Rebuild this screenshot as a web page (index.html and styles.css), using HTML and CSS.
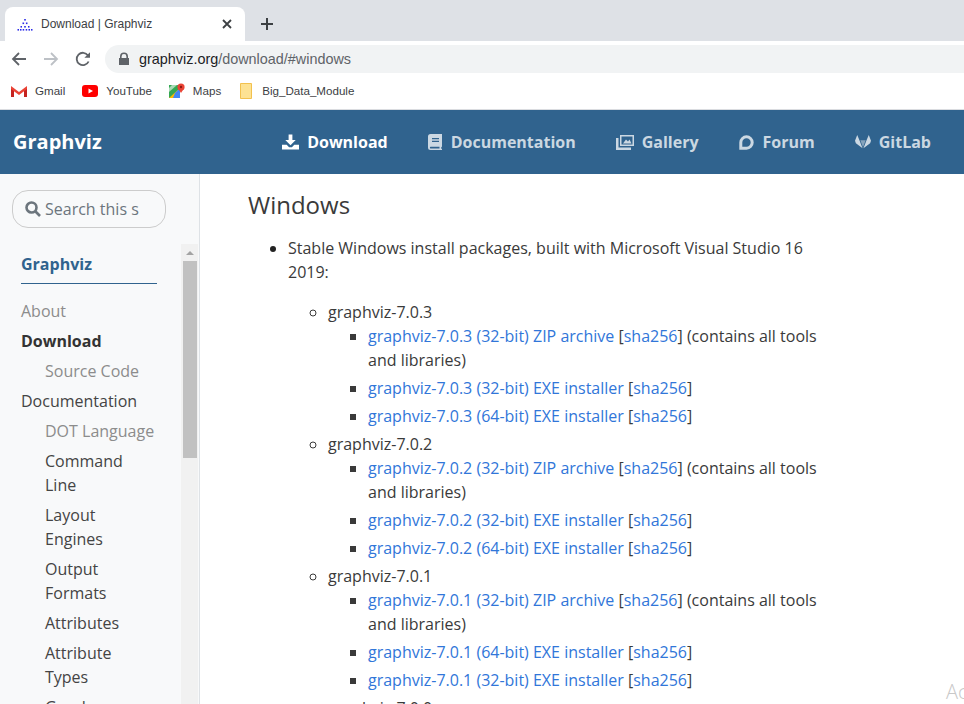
FILE: index.html
```html
<!DOCTYPE html>
<html>
  <head>
    <title>Download | Graphviz</title>
    <link rel="stylesheet" href="styles.css">
  </head>
  <body>
    <!-- browser chrome -->
    <div class="tabstrip">
      <div class="tab">
        <svg class="favicon" width="16" height="16" viewBox="0 0 16 16" fill="#2a2ae8">
          <rect x="7.200" y="3" width="1.600" height="1.600"/>
          <rect x="5.500" y="6.500" width="1.600" height="1.600"/><rect x="8.900" y="6.500" width="1.600" height="1.600"/>
          <rect x="3.500" y="10" width="1.500" height="1.600"/><rect x="7.200" y="10" width="1.600" height="1.600"/><rect x="11" y="10" width="1.500" height="1.600"/>
          <rect x="0.500" y="13" width="1.500" height="1.600"/><rect x="3" y="13" width="1.500" height="1.600"/><rect x="5.700" y="13" width="1.500" height="1.600"/><rect x="8.700" y="13" width="1.500" height="1.600"/><rect x="11.500" y="13" width="1.500" height="1.600"/><rect x="14" y="13" width="1.500" height="1.600"/>
        </svg>
        <span class="tab-title">Download | Graphviz</span>
        <svg width="10" height="10" viewBox="0 0 10 10" stroke="#3c4043" stroke-width="1.800"><path d="M1 1l8 8M9 1l-8 8"/></svg>
      </div>
      <svg class="newtab" width="14" height="14" viewBox="0 0 14 14" stroke="#3c4043" stroke-width="2"><path d="M7 1v12M1 7h12"/></svg>
    </div>
    <div class="toolbar">
      <svg width="16" height="16" viewBox="0 0 16 16" fill="none" stroke="#5f6368" stroke-width="1.800"><path d="M15 8H2M8 2L2 8l6 6"/></svg>
      <svg width="16" height="16" viewBox="0 0 16 16" fill="none" stroke="#bdc1c6" stroke-width="1.800"><path d="M1 8h13M8 2l6 6-6 6"/></svg>
      <svg width="16" height="16" viewBox="0 0 16 16" fill="none" stroke="#5f6368" stroke-width="1.800"><path d="M13.600 10.500A6.200 6.200 0 1 1 13 4.400"/><path d="M15 1.200v5.600H9.400z" fill="#5f6368" stroke="none"/></svg>
      <div class="omnibox">
        <svg width="12" height="14" viewBox="0 0 12 14" fill="#5f6368"><path d="M2 6V4.500a4 4 0 0 1 8 0V6h1v7H1V6zm1.600 0h4.800V4.500a2.400 2.400 0 0 0-4.800 0z"/></svg>
        <span class="url"><b>graphviz.org</b>/download/#windows</span>
      </div>
    </div>
    <div class="bookmarks">
      <span class="bookmark">
        <svg width="16" height="12" viewBox="0 0 16 12"><path d="M0 2v10h3V5z" fill="#c5221f"/><path d="M16 2v10h-3V5z" fill="#c5221f"/><path d="M0 1l8 6 8-6v3L8 10 0 4z" fill="#ea4335"/></svg>
        Gmail
      </span>
      <span class="bookmark">
        <svg width="16" height="12" viewBox="0 0 16 12"><rect width="16" height="12" rx="3" fill="#f00"/><path d="M6.500 3.500v5L11 6z" fill="#fff"/></svg>
        YouTube
      </span>
      <span class="bookmark">
        <svg width="16" height="16" viewBox="0 0 16 16"><path d="M0 2h11v13H0z" fill="#34a853"/><path d="M0 15L11 5v10z" fill="#fbbc04"/><path d="M6 10l5-5v10H4z" fill="#4285f4"/><path d="M3 2h5L0 9V5z" fill="#a8dab5"/><circle cx="12" cy="4" r="3.600" fill="#ea4335"/><path d="M9.400 6l2.600 4 2.600-4z" fill="#ea4335"/><circle cx="12" cy="4" r="1.200" fill="#8c1a12"/></svg>
        Maps
      </span>
      <span class="bookmark">
        <svg width="16" height="16" viewBox="-2 0 16 16"><path d="M.5.5h11v15H.5z" fill="#fde293" stroke="#f2c14e"/></svg>
        Big_Data_Module
      </span>
    </div>

    <!-- site navbar -->
    <header class="navbar">
      <a class="brand">Graphviz</a>
      <nav class="nav-links">
        <a class="nav-link active">
          <svg width="17" height="16" viewBox="0 0 18 16" fill="currentColor"><path d="M7 0h4v6h3.500L9 11.500 3.500 6H7z"/><path d="M0 11h5l2.500 2.500h3L13 11h5v5H0z"/></svg>
          Download
        </a>
        <a class="nav-link">
          <svg width="15" height="16" viewBox="0 0 15 16" fill="currentColor"><path fill-rule="evenodd" d="M2.500 0H14v12.500l-.8.9v1.200l.8.4v1H2.500A2.500 2.500 0 0 1 0 13.500v-11A2.500 2.500 0 0 1 2.500 0zM4 4v1.200h7V4zm0 2.700v1.200h7V6.700zM2.500 12.800a.9.9 0 0 0 0 1.700h9v-1.700z"/></svg>
          Documentation
        </a>
        <a class="nav-link">
          <svg width="18" height="15" viewBox="0 0 18 15" fill="currentColor"><path fill-rule="evenodd" d="M4 0h14v11H4zm1.500 1.500v8h11v-8zM7 8.500l3-4 2 2 1.500-2 2 4z"/><path d="M0 3h2.500v9.500H15V15H0z"/></svg>
          Gallery
        </a>
        <a class="nav-link">
          <svg width="16" height="15" viewBox="0 0 16 15" fill="none" stroke="currentColor" stroke-width="3"><path d="M1.800 13.200V7.500a5.700 5.700 0 1 1 5.700 5.700z"/></svg>
          Forum
        </a>
        <a class="nav-link">
          <svg width="16" height="16" viewBox="0 0 18 16" fill="currentColor"><path d="M2.500 0L5 6l3.500 9L1 9.500 0 6.500zM15.500 0L13 6l-3.500 9L17 9.500 18 6.500z"/><path d="M6 6h6l-3 8z" opacity=".55"/></svg>
          GitLab
        </a>
      </nav>
    </header>

    <div class="page">
      <aside class="sidebar">
        <div class="search">
          <svg width="16" height="16" viewBox="0 0 16 16" fill="none" stroke="#6c757d" stroke-width="2.600"><circle cx="6.500" cy="6.500" r="5"/><path d="M10.500 10.500l4.500 4.500"/></svg>
          <span>Search this s</span>
        </div>
        <div class="side-scroll">
          <div class="side-nav">
            <div class="side-title">Graphviz</div>
            <a class="side-link muted">About</a>
            <a class="side-link current">Download</a>
            <a class="side-link sub muted">Source Code</a>
            <a class="side-link">Documentation</a>
            <a class="side-link sub muted">DOT Language</a>
            <a class="side-link sub">Command Line</a>
            <a class="side-link sub">Layout Engines</a>
            <a class="side-link sub">Output Formats</a>
            <a class="side-link sub">Attributes</a>
            <a class="side-link sub">Attribute Types</a>
            <a class="side-link sub">Graphs</a>
          </div>
          <div class="scrollbar">
            <div class="scroll-up"></div>
            <div class="scroll-thumb"></div>
          </div>
        </div>
      </aside>

      <main class="content">
        <h2>Windows</h2>
        <ul class="level1">
          <li>
            Stable Windows install packages, built with Microsoft Visual Studio 16 2019:
            <ul class="level2">
              <li>graphviz-7.0.3
                <ul class="level3">
                  <li><a>graphviz-7.0.3 (32-bit) ZIP archive</a> [<a>sha256</a>] (contains all tools and libraries)</li>
                  <li><a>graphviz-7.0.3 (32-bit) EXE installer</a> [<a>sha256</a>]</li>
                  <li><a>graphviz-7.0.3 (64-bit) EXE installer</a> [<a>sha256</a>]</li>
                </ul>
              </li>
              <li>graphviz-7.0.2
                <ul class="level3">
                  <li><a>graphviz-7.0.2 (32-bit) ZIP archive</a> [<a>sha256</a>] (contains all tools and libraries)</li>
                  <li><a>graphviz-7.0.2 (32-bit) EXE installer</a> [<a>sha256</a>]</li>
                  <li><a>graphviz-7.0.2 (64-bit) EXE installer</a> [<a>sha256</a>]</li>
                </ul>
              </li>
              <li>graphviz-7.0.1
                <ul class="level3">
                  <li><a>graphviz-7.0.1 (32-bit) ZIP archive</a> [<a>sha256</a>] (contains all tools and libraries)</li>
                  <li><a>graphviz-7.0.1 (64-bit) EXE installer</a> [<a>sha256</a>]</li>
                  <li><a>graphviz-7.0.1 (32-bit) EXE installer</a> [<a>sha256</a>]</li>
                </ul>
              </li>
              <li>graphviz-7.0.0</li>
            </ul>
          </li>
        </ul>
      </main>
    </div>

    <div class="watermark">Ac</div>
  </body>
</html>
```

FILE: styles.css
```css
*{
    box-sizing: border-box;
}
html, body{
    margin: 0;
    height: 704px;
    overflow: hidden;
}
body{
    position: relative;
    display: flex;
    flex-direction: column;
    font-family: "Open Sans", sans-serif;
    font-size: 16px;
    line-height: 24px;
    color: #3a3a3a;
    background: #fff;
}

/* browser chrome */
.tabstrip{
    height: 41px;
    flex: none;
    display: flex;
    align-items: flex-end;
    padding-left: 5px;
    background: #dee1e6;
}
.tab{
    width: 240px;
    height: 34px;
    display: flex;
    align-items: center;
    padding: 0 13px 0 12px;
    background: #fff;
    border-radius: 8px 8px 0 0;
}
.favicon{
    flex: none;
}
.tab-title{
    flex: 1;
    margin-left: 8px;
    font-family: "Liberation Sans", sans-serif;
    font-size: 12px;
    color: #3c4043;
}
.newtab{
    margin: 0 0 10px 15px;
}
.toolbar{
    height: 32px;
    flex: none;
    display: flex;
    align-items: center;
    gap: 16px;
    padding: 4px 0 0 11px;
}
.omnibox{
    flex: 1;
    height: 28px;
    margin-left: -2px;
    display: flex;
    align-items: center;
    gap: 9px;
    padding-left: 13px;
    background: #f1f3f4;
    border-radius: 14px 0 0 14px;
}
.url{
    font-family: "Liberation Sans", sans-serif;
    font-size: 14.4px;
    color: #5f6368;
}
.url b{
    font-weight: 400;
    color: #202124;
}
.bookmarks{
    height: 37px;
    flex: none;
    display: flex;
    align-items: center;
    gap: 17px;
    padding-left: 11px;
    border-bottom: 1px solid #dadce0;
}
.bookmark{
    display: flex;
    align-items: center;
    gap: 8px;
    font-family: "Liberation Sans", sans-serif;
    font-size: 11.6px;
    color: #3c4043;
}

/* navbar */
.navbar{
    height: 64px;
    flex: none;
    display: flex;
    align-items: center;
    justify-content: space-between;
    padding: 0 33px 0 13px;
    background: #30638e;
}
.brand{
    font-size: 20px;
    font-weight: 700;
    color: #fff;
}
.nav-links{
    display: flex;
    gap: 40px;
}
.nav-link{
    display: flex;
    align-items: center;
    gap: 8px;
    font-size: 16px;
    font-weight: 700;
    color: rgba(255,255,255,.75);
}
.nav-link.active{
    color: #fff;
}

/* sidebar */
.page{
    flex: 1;
    min-height: 0;
    display: flex;
}
.sidebar{
    width: 200px;
    flex: none;
    display: flex;
    flex-direction: column;
    background: #f8f9fa;
    border-right: 1px solid #dee2e6;
}
.search{
    width: 154px;
    height: 38px;
    flex: none;
    margin: 16px 0 16px 12px;
    display: flex;
    align-items: center;
    gap: 4px;
    padding-left: 12px;
    background: #fff0;
    border: 1px solid #ccc;
    border-radius: 16px;
    color: #6c757d;
    overflow: hidden;
    white-space: nowrap;
}
.side-scroll{
    flex: 1;
    min-height: 0;
    display: flex;
    overflow: hidden;
}
.side-nav{
    width: 181px;
    flex: none;
    padding: 8px 24px 0 21px;
}
.side-title{
    height: 32px;
    margin-bottom: 12px;
    font-weight: 700;
    color: #30638e;
    border-bottom: 1px solid #30638e;
}
.side-link{
    display: block;
    padding: 3px 0;
    color: #444;
}
.side-link.sub{
    padding-left: 24px;
}
.side-link.muted{
    color: #8c8c8c;
}
.side-link.current{
    font-weight: 700;
    color: #333;
}
.scrollbar{
    width: 17px;
    flex: none;
    background: #f1f1f1;
}
.scroll-up{
    height: 17px;
    display: flex;
    justify-content: center;
    padding-top: 7px;
}
.scroll-up::before{
    content: "";
    width: 0;
    height: 0;
    border: 4px solid transparent;
    border-top-width: 0;
    border-bottom: 4px solid #a3a3a3;
}
.scroll-thumb{
    width: 14px;
    height: 197px;
    margin-left: 2px;
    background: #c1c1c1;
}

/* content */
.content{
    flex: 1;
    padding: 15px 0 0 48px;
    width: 582px;
    overflow: hidden;
}
h2{
    margin: 0 0 15px;
    font-size: 24px;
    font-weight: 400;
    line-height: 32px;
    color: #3a3a3a;
}
ul{
    margin: 0;
    padding-left: 40px;
}
.level1{
    width: 580px;
}
.level1 > li::marker{
    color: #222;
}
.level2{
    margin-top: 16px;
    list-style: circle;
}
.level2 > li{
    margin-bottom: 4px;
}
.level3{
    list-style: square;
}
.level3 li{
    margin-bottom: 4px;
}
a{
    color: #3176d9;
}
.watermark{
    position: absolute;
    left: 946px;
    top: 680px;
    font-family: "Open Sans", sans-serif;
    font-size: 20px;
    font-weight: 300;
    color: #c8c8c8;
}
```
